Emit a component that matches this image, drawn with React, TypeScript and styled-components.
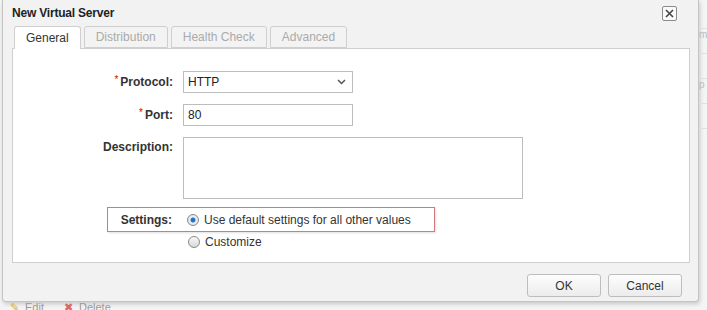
import React, { ReactElement } from 'react'
import styled, { createGlobalStyle } from 'styled-components'

const GlobalStyle = createGlobalStyle`
  html, body {
    margin: 0;
    padding: 0;
    background: #f4f4f4;
    overflow: hidden;
  }
  body {
    font-family: "Liberation Sans", Arial, sans-serif;
    font-size: 12px;
    color: #333;
  }
`

const Screen = styled.div`
  width: 707px;
  height: 310px;
  display: flex;
  flex-direction: column;
  background: #f4f4f4;
`

const TopRow = styled.div`
  display: flex;
  flex-direction: row;
`

const Dialog = styled.div`
  margin-left: 2px;
  width: 697px;
  height: 302px;
  box-sizing: border-box;
  background: #f2f2f2;
  border: 1px solid #c4c4c4;
  border-top: none;
  border-radius: 0 0 4px 4px;
  box-shadow: 1px 2px 4px rgba(0, 0, 0, 0.18);
  display: flex;
  flex-direction: column;
  padding: 0 9px 0 9px;
`

const TitleBar = styled.div`
  display: flex;
  align-items: center;
  justify-content: space-between;
  height: 25px;
`

const Title = styled.div`
  font-weight: bold;
  font-size: 12px;
  color: #222;
  letter-spacing: -0.2px;
`

const CloseButton = styled.div`
  width: 13px;
  height: 13px;
  border: 1px solid #8a8a8a;
  border-radius: 2px;
  background: #fafafa;
  display: flex;
  align-items: center;
  justify-content: center;
  margin-right: 12px;
  margin-top: 2px;
`

const TabBar = styled.div`
  display: flex;
  gap: 3px;
  padding-left: 2px;
  height: 23px;
  align-items: flex-end;
`

const Tab = styled.div<{ active?: boolean }>`
  height: ${p => (p.active ? '23px' : '22px')};
  box-sizing: border-box;
  padding: 0 11px;
  display: flex;
  align-items: center;
  border: 1px solid #cfcfcf;
  border-bottom: ${p => (p.active ? 'none' : '1px solid #cfcfcf')};
  border-radius: 3px 3px 0 0;
  background: ${p => (p.active ? '#ffffff' : '#f3f3f3')};
  color: ${p => (p.active ? '#333' : '#aaa')};
  font-size: 12px;
  margin-bottom: ${p => (p.active ? '-1px' : '0')};
  position: relative;
  z-index: 1;
`

const Panel = styled.div`
  width: 678px;
  height: 215px;
  box-sizing: border-box;
  background: #fff;
  border: 1px solid #cfcfcf;
  padding-top: 22px;
  display: flex;
  flex-direction: column;
`

const FormGrid = styled.div`
  display: grid;
  grid-template-columns: 160px auto;
  grid-auto-rows: min-content;
  column-gap: 10px;
  row-gap: 11px;
  align-items: start;
`

const Label = styled.div<{ tall?: boolean }>`
  font-weight: bold;
  text-align: right;
  color: #333;
  height: ${p => (p.tall ? '18px' : '22px')};
  line-height: ${p => (p.tall ? '18px' : '22px')};
  padding-top: ${p => (p.tall ? '1px' : '0')};
`

const Star = styled.span`
  color: #d00;
  font-weight: normal;
  font-size: 10px;
  position: relative;
  top: -3px;
  margin-right: 2px;
`

const Select = styled.div`
  width: 170px;
  height: 22px;
  box-sizing: border-box;
  border: 1px solid #bdbdbd;
  display: flex;
  align-items: center;
  justify-content: space-between;
  padding: 0 6px 0 4px;
  color: #222;
  font-size: 12px;
`

const Input = styled.div`
  width: 170px;
  height: 22px;
  box-sizing: border-box;
  border: 1px solid #bdbdbd;
  display: flex;
  align-items: center;
  padding: 0 4px;
  color: #222;
  font-size: 12px;
`

const TextArea = styled.div`
  width: 340px;
  height: 62px;
  box-sizing: border-box;
  border: 1px solid #bdbdbd;
`

const SettingsBox = styled.div`
  margin-top: 8px;
  margin-left: 94px;
  width: 328px;
  height: 25px;
  box-sizing: border-box;
  border: 1px solid #d07c7c;
  box-shadow: 1px 1px 2px rgba(0, 0, 0, 0.12);
  display: flex;
  align-items: center;
`

const SettingsLabel = styled.div`
  width: 64px;
  text-align: right;
  font-weight: bold;
  color: #333;
  margin-right: 15px;
`

const RadioRow = styled.div<{ indent?: boolean }>`
  display: flex;
  align-items: center;
  gap: 5px;
  color: #333;
  margin-left: ${p => (p.indent ? '175px' : '0')};
  margin-top: ${p => (p.indent ? '3px' : '0')};
`

const Radio = styled.div<{ checked?: boolean }>`
  width: 10px;
  height: 10px;
  border-radius: 50%;
  border: 1px solid #8a8a8a;
  background: ${p => (p.checked ? 'radial-gradient(circle, #1d6fc2 0, #2a74c0 2px, #eaf2fb 3px, #e4e4e4 5px)' : 'linear-gradient(#f8f8f8, #d8d8d8)')};
`

const Footer = styled.div`
  display: flex;
  justify-content: flex-end;
  gap: 7px;
  padding-top: 11px;
  padding-right: 7px;
`

const Button = styled.div`
  width: 74px;
  height: 23px;
  box-sizing: border-box;
  border: 1px solid #bdbdbd;
  border-radius: 3px;
  background: linear-gradient(#fdfdfd, #ececec);
  display: flex;
  align-items: center;
  justify-content: center;
  color: #333;
  font-size: 12px;
`

const SideStrip = styled.div`
  flex: 1;
  display: flex;
  flex-direction: column;
  padding-top: 28px;
`

const SideLine = styled.div`
  height: 24px;
  border-top: 1px solid #e0e0e0;
  color: #bbb;
  font-size: 10px;
  overflow: hidden;
  white-space: nowrap;
`

const BottomBar = styled.div`
  display: flex;
  gap: 20px;
  padding: 2px 0 0 10px;
  color: #999;
  font-size: 11px;
  height: 8px;
  overflow: hidden;
`

const BottomItem = styled.span`
  display: flex;
  gap: 6px;
  align-items: center;
`

function App(): ReactElement {
  return (<Screen>
    <GlobalStyle />
    <TopRow>
      <Dialog>
        <TitleBar>
          <Title>New Virtual Server</Title>
          <CloseButton>
            <svg width="9" height="9" viewBox="0 0 9 9">
              <path d="M1 1 L8 8 M8 1 L1 8" stroke="#444" strokeWidth="1.6" />
            </svg>
          </CloseButton>
        </TitleBar>
        <TabBar>
          <Tab active>General</Tab>
          <Tab>Distribution</Tab>
          <Tab>Health Check</Tab>
          <Tab>Advanced</Tab>
        </TabBar>
        <Panel>
          <FormGrid>
            <Label><Star>*</Star>Protocol:</Label>
            <Select>
              <span>HTTP</span>
              <svg width="9" height="6" viewBox="0 0 9 6">
                <path d="M1 1 L4.5 4.5 L8 1" stroke="#555" strokeWidth="1.5" fill="none" />
              </svg>
            </Select>
            <Label><Star>*</Star>Port:</Label>
            <Input>80</Input>
            <Label tall>Description:</Label>
            <TextArea />
          </FormGrid>
          <SettingsBox>
            <SettingsLabel>Settings:</SettingsLabel>
            <RadioRow>
              <Radio checked />
              <span>Use default settings for all other values</span>
            </RadioRow>
          </SettingsBox>
          <RadioRow indent>
            <Radio />
            <span>Customize</span>
          </RadioRow>
        </Panel>
        <Footer>
          <Button>OK</Button>
          <Button>Cancel</Button>
        </Footer>
      </Dialog>
      <SideStrip>
        <SideLine>m</SideLine>
        <SideLine />
        <SideLine>p</SideLine>
        <SideLine />
        <SideLine />
      </SideStrip>
    </TopRow>
    <BottomBar>
      <BottomItem><span style={{ color: '#e0b040' }}>✎</span>Edit</BottomItem>
      <BottomItem><span style={{ color: '#d66' }}>✖</span>Delete</BottomItem>
    </BottomBar>
  </Screen>)
}

export default App
